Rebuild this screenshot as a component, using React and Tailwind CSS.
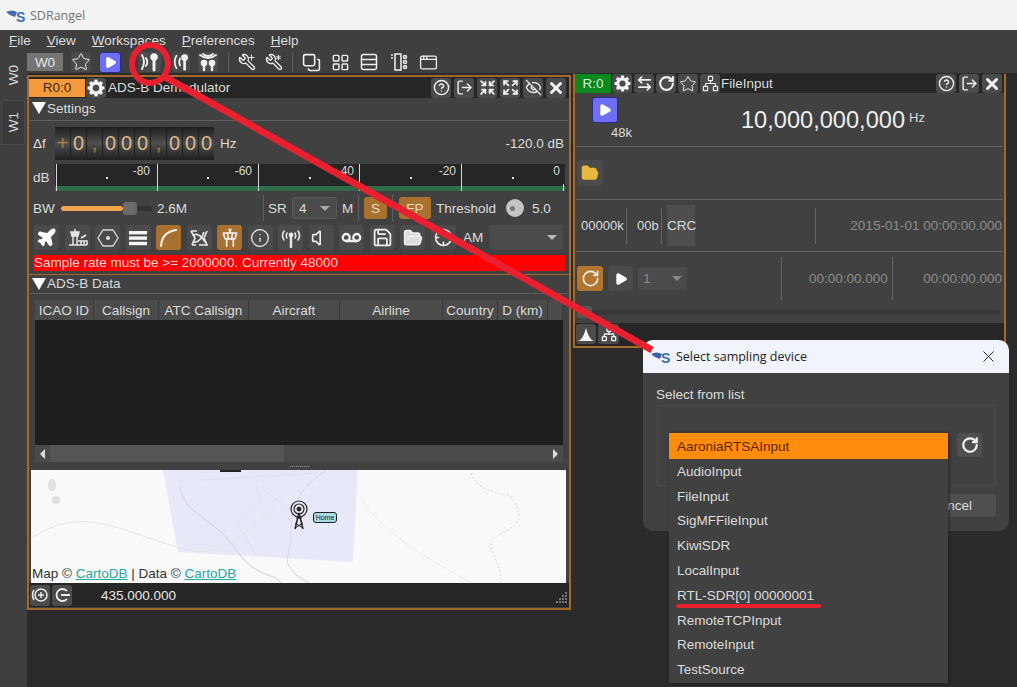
import { AppWindow, ArrowLeftRight, Asterisk, Copy, Crosshair, Expand, EyeOff, FolderOpen, Info, LayoutGrid, LogOut, Network, Plane, Play, Plus, RotateCw, Rows3, Save, Shrink, Star, TowerControl, Voicemail, Volume, Wrench, X, CircleHelp } from 'lucide-react';

const menus = [['F', 'ile'], ['V', 'iew'], ['W', 'orkspaces'], ['P', 'references'], ['H', 'elp']];
const devices = ['AudioInput', 'FileInput', 'SigMFFileInput', 'KiwiSDR', 'LocalInput', 'RTL-SDR[0] 00000001', 'RemoteTCPInput', 'RemoteInput', 'TestSource'];
const columns = [['ICAO ID', 'w-[59px]'], ['Callsign', 'w-[65px]'], ['ATC Callsign', 'w-[90px]'], ['Aircraft', 'w-[91px]'], ['Airline', 'w-[103px]'], ['Country', 'w-[55px]'], ['D (km)', 'w-[50px]'], ['', 'flex-1']];

function Logo({ dark }) {
  return (
    <div className="flex items-center w-[20px] h-[16px] relative">
      <svg width="12" height="10" viewBox="0 0 12 10" className="mt-[-2px]">
        <path d="M0 3 Q6 0 11 3 L9 8 Q4 7 0 3Z" fill={dark ? '#3d5fa8' : '#4468ad'} />
      </svg>
      <span className="text-[14px] font-bold text-[#3f6db5] leading-none ml-[-2px] mt-[3px]">S</span>
    </div>
  );
}

function Tool({ children, className = 'w-[20px] h-[20px] bg-[#4b4b4b]' }) {
  return <div className={`relative flex items-center justify-center rounded-[3px] shrink-0 text-[#f0f0f0] ${className}`}>{children}</div>;
}

function Gear({ size = 18 }) {
  const teeth = [0, 45, 90, 135, 180, 225, 270, 315];
  return (
    <svg width={size} height={size} viewBox="0 0 18 18" fill="none">
      <circle cx="9" cy="9" r="5" stroke="#f4f4f4" strokeWidth="3.4" />
      {teeth.map((a) => (
        <rect key={a} x="7.4" y="0.6" width="3.2" height="3.4" fill="#f4f4f4" transform={`rotate(${a} 9 9)`} />
      ))}
    </svg>
  );
}

function RxIcon({ flip }) {
  return (
    <svg width="20" height="20" viewBox="0 0 20 20" fill="none" stroke="#f0f0f0" strokeWidth="1.9" strokeLinecap="round">
      {flip ? (
        <>
          <path d="M5 3 Q1 10 5 17" />
          <path d="M9 6 Q7 10 9 14" />
        </>
      ) : (
        <>
          <path d="M2 3 Q6 10 2 17" />
          <path d="M6 6 Q8.5 10 6 14" />
        </>
      )}
      <circle cx="14" cy="5" r="2.8" fill="#f0f0f0" />
      <path d="M14 7 V18" strokeWidth="3" />
    </svg>
  );
}

function MimoIcon() {
  return (
    <svg width="20" height="20" viewBox="0 0 20 20" fill="none" stroke="#f0f0f0" strokeWidth="1.8" strokeLinecap="round">
      <path d="M2 3 Q10 9 18 3" />
      <path d="M5 2 Q10 6 15 2" />
      <circle cx="6" cy="11" r="2.4" fill="#f0f0f0" />
      <circle cx="14" cy="11" r="2.4" fill="#f0f0f0" />
      <path d="M6 12 V18 M14 12 V18" strokeWidth="2.4" />
    </svg>
  );
}

function SidePanelIcon() {
  return (
    <svg width="20" height="20" viewBox="0 0 20 20" fill="none" stroke="#e8e8e8" strokeWidth="1.6">
      <rect x="6" y="2" width="6" height="16" />
      <path d="M2 3 H4 M2 6 H4" />
      <circle cx="16" cy="5" r="1.5" />
      <circle cx="16" cy="10" r="1.5" />
      <circle cx="16" cy="15" r="1.5" />
    </svg>
  );
}

function HexDot() {
  return (
    <svg width="22" height="20" viewBox="0 0 22 20" fill="none" stroke="#d8d8d8" strokeWidth="1.3">
      <path d="M1 10 L6 2 H16 L21 10 L16 18 H6Z" />
      <circle cx="11" cy="10" r="1.4" fill="#e8e8e8" />
    </svg>
  );
}

function Bars() {
  return (
    <svg width="20" height="18" viewBox="0 0 20 18" fill="#f6f6f6">
      <rect x="1" y="2" width="18" height="3.4" />
      <rect x="1" y="7.4" width="18" height="3.4" />
      <rect x="1" y="12.8" width="18" height="3.4" />
    </svg>
  );
}

function Arc() {
  return (
    <svg width="19" height="19" viewBox="0 0 19 19" fill="none" stroke="#f2ece2" strokeWidth="2.2" strokeLinecap="round">
      <path d="M2 18 Q3 4 17 2" />
    </svg>
  );
}

function SweepIcon() {
  return (
    <svg width="20" height="20" viewBox="0 0 20 20" fill="none" stroke="#e8e8e8" strokeWidth="1.7">
      <path d="M2 3 L6 10 L3 17 M2 3 H8 M18 3 L15 10 L18 17 H10 M3 17 H7" />
      <path d="M5 14 Q11 15 15 4" />
      <path d="M4 8 Q9 3 16 14" />
    </svg>
  );
}

function AirportIcon() {
  return (
    <svg width="21" height="21" viewBox="0 0 21 21" fill="none" stroke="#e8e8e8" strokeWidth="1.5">
      <path d="M4 5 H12 L11 9 H5Z" fill="#e8e8e8" />
      <path d="M6 9 V18 M10 9 V18 M2 18 H20 M11 14 H20 V18 M14 14 V18 M17 14 V18" />
      <path d="M14 11 L19 8" strokeWidth="2" />
      <path d="M8 2 V5" />
    </svg>
  );
}

function AntennaIcon() {
  return (
    <svg width="22" height="20" viewBox="0 0 22 20" fill="none" stroke="#e8e8e8" strokeWidth="1.6" strokeLinecap="round">
      <path d="M4 3 Q1 8 4 12 M7 5 Q5.5 8 7 10 M18 3 Q21 8 18 12 M15 5 Q16.5 8 15 10" />
      <circle cx="11" cy="7" r="1.6" fill="#e8e8e8" />
      <path d="M11 8 V19" strokeWidth="2.4" />
    </svg>
  );
}

function Scale() {
  const majors = [1, 102, 203, 304, 406];
  const minors = [51, 152, 254, 355, 457];
  const labels = [['-80', 95], ['-60', 197], ['-40', 299], ['-20', 401], ['0', 505]];
  return (
    <svg width="510" height="28" className="block">
      <rect width="510" height="22" fill="#262626" />
      <rect y="22" width="510" height="5" fill="#2f6a4a" />
      {majors.map((x) => (
        <rect key={x} x={x} y="0" width="1" height="27" fill="#d8d8d8" />
      ))}
      <rect x="508" y="20" width="1" height="7" fill="#d8d8d8" />
      {minors.map((x) => (
        <rect key={x} x={x} y="13" width="2" height="2" fill="#e8e8e8" />
      ))}
      {labels.map(([t, x]) => (
        <text key={t} x={x} y="11" textAnchor="end" fontSize="12" fill="#d9d9d9" fontFamily="Liberation Sans, sans-serif">{t}</text>
      ))}
    </svg>
  );
}

function Digit({ children, dim }) {
  return (
    <div className={`w-[15px] h-[33px] flex items-center justify-center bg-linear-to-b from-[#1f1f1f] via-[#4f4f4f] to-[#1f1f1f] text-[20px] leading-none ${dim ? 'text-[#a5804f]' : 'text-[#d8b98d]'}`}>
      {children}
    </div>
  );
}

function MapView() {
  return (
    <div className="relative ml-[2px] w-[535px] h-[113px] bg-[#f8f9f8] overflow-hidden shrink-0">
      <svg width="535" height="113" className="block" fill="none">
        <path d="M132 0 L327 0 L322 92 L147 82Z" fill="#e8e9f8" />
        <rect x="189" y="0" width="21" height="2" fill="#222" />
        <path d="M0 68 C20 55 40 50 60 52 S100 62 130 72 S170 85 190 78 S230 45 245 40" stroke="#e2e4e8" strokeWidth="1" />
        <path d="M150 15 C148 35 170 45 190 62 S205 95 245 108 L250 113" stroke="#d8dae6" strokeWidth="1.3" />
        <path d="M295 0 C280 12 262 20 260 60 S250 85 265 105 L278 113" stroke="#d8dae6" strokeWidth="1.1" />
        <path d="M170 10 L285 3 M225 15 L260 40 M210 50 L230 30 L225 15 M205 52 L225 85" stroke="#dfe0ee" />
        <path d="M330 30 C360 70 400 90 440 113" stroke="#eceeee" />
        <path d="M440 3 C445 20 470 25 478 25 C490 40 492 50 480 58 L460 70 C458 85 470 90 470 113" stroke="#eccbd0" strokeDasharray="2 2" />
        <ellipse cx="21" cy="15" rx="4" ry="6" fill="#dce1e2" />
        <ellipse cx="25" cy="30" rx="4" ry="4" fill="#dce1e2" />
        <g stroke="#222">
          <path d="M264 59 L268 43 L272 59" strokeWidth="1.5" />
          <path d="M264 58 L272 53 M272 58 L264 53 M265 48 H271" strokeWidth="1" />
          <circle cx="268" cy="39" r="2" fill="#222" />
          <circle cx="268" cy="39" r="5" strokeWidth="1.2" />
          <circle cx="268" cy="39" r="8" strokeWidth="1.2" />
        </g>
      </svg>
      <div className="absolute left-[282px] top-[42px] w-[24px] h-[11px] rounded-[3px] border border-[#222] bg-[#a9dbe6] text-[7px] leading-[9px] text-center text-[#222]">Home</div>
      <div className="absolute left-[1px] bottom-0 leading-[18px] text-[#333] whitespace-nowrap">
        Map © <span className="text-[#26a7a7] underline">CartoDB</span> | Data © <span className="text-[#26a7a7] underline">CartoDB</span>
      </div>
    </div>
  );
}

function AdsbPanel() {
  return (
    <div className="absolute left-0 top-[2px] w-[544px] h-[535px] border-2 border-[#a06a2d] bg-[#414141] text-[#dcdcdc] flex flex-col">
      <div className="h-[21px] bg-[#262626] flex items-center shrink-0 pr-[3px]">
        <div className="w-[56px] h-[18px] bg-[#f59a3a] text-[#3c2a12] flex items-center justify-center">R0:0</div>
        <Tool className="w-[20px] h-[20px] ml-[1px] bg-[#4b4b4b]"><Gear /></Tool>
        <span className="ml-[2px]">ADS-B Demodulator</span>
        <div className="ml-auto flex gap-[3px]">
          <Tool><CircleHelp size={17} strokeWidth={2} /></Tool>
          <Tool><LogOut size={17} strokeWidth={2} /></Tool>
          <Tool><Shrink size={17} strokeWidth={2.6} /></Tool>
          <Tool><Expand size={17} strokeWidth={2.6} /></Tool>
          <Tool><EyeOff size={17} strokeWidth={1.8} /></Tool>
          <Tool><X size={18} strokeWidth={4} /></Tool>
        </div>
      </div>
      <div className="h-[22px] flex items-center pl-[3px] pb-[2px] shrink-0">
        <div className="w-0 h-0 border-l-[7px] border-r-[7px] border-t-[12px] border-l-transparent border-r-transparent border-t-white" />
        <span className="ml-[1px]">Settings</span>
      </div>
      <div className="h-px bg-[#5f5f5f] mx-[1px] shrink-0" />
      <div className="flex items-center h-[34px] mt-[5px] pl-[4px] pr-[5px] shrink-0">
        <span className="w-[22px]">Δf</span>
        <div className="flex gap-px bg-[#1c1c1c]">
          <Digit dim>+</Digit><Digit>0</Digit><Digit dim>,</Digit><Digit>0</Digit><Digit>0</Digit><Digit>0</Digit><Digit dim>,</Digit><Digit>0</Digit><Digit>0</Digit><Digit>0</Digit>
        </div>
        <span className="ml-[6px]">Hz</span>
        <span className="ml-auto">-120.0 dB</span>
      </div>
      <div className="flex items-center h-[28px] mt-[4px] pl-[4px] shrink-0">
        <span className="w-[22px] pb-[2px]">dB</span>
        <Scale />
      </div>
      <div className="flex items-center h-[22px] mt-[5px] pl-[4px] shrink-0">
        <span className="w-[28px]">BW</span>
        <div className="w-[91px] h-[5px] rounded-full bg-[#333] relative">
          <div className="w-[62px] h-[5px] rounded-full bg-[#efa64d]" />
          <div className="absolute left-[62px] top-[-4px] w-[14px] h-[13px] rounded-[3px] bg-[#6a6a6a]" />
        </div>
        <span className="ml-[5px] w-[106px]">2.6M</span>
        <div className="w-px h-[26px] bg-[#5f5f5f]" />
        <span className="ml-[4px] w-[24px]">SR</span>
        <div className="w-[45px] h-[22px] rounded-[3px] bg-[#4b4b4b] border border-[#5a5a5a] flex items-center justify-between px-[6px]">
          <span>4</span>
          <div className="w-0 h-0 border-l-[5px] border-r-[5px] border-t-[5px] border-l-transparent border-r-transparent border-t-[#aaa]" />
        </div>
        <span className="ml-[5px] w-[16px]">M</span>
        <div className="w-px h-[26px] bg-[#5f5f5f]" />
        <div className="ml-[5px] w-[23px] h-[22px] rounded-[3px] bg-[#a9712f] flex items-center justify-center text-[#e9d8c0]">S</div>
        <div className="ml-[5px] w-px h-[26px] bg-[#5f5f5f]" />
        <div className="ml-[6px] w-[32px] h-[22px] rounded-[3px] bg-[#a9712f] flex items-center justify-center text-[#e9d8c0]">FP</div>
        <span className="ml-[5px]">Threshold</span>
        <div className="ml-[10px] w-[18px] h-[18px] rounded-full bg-[#c4c4c4] flex items-center justify-center">
          <div className="w-[5px] h-[5px] rounded-full bg-[#777] mr-[5px]" />
        </div>
        <span className="ml-[8px]">5.0</span>
      </div>
      <div className="flex items-center h-[25px] mt-[6px] pl-[5px] gap-[5.5px] shrink-0">
        <Tool className="w-[25px] h-[25px] bg-[#4b4b4b]"><Plane size={21} fill="#fff" stroke="#fff" /></Tool>
        <Tool className="w-[25px] h-[25px] bg-[#4b4b4b]"><AirportIcon /></Tool>
        <Tool className="w-[25px] h-[25px] bg-[#4b4b4b]"><HexDot /></Tool>
        <Tool className="w-[25px] h-[25px] bg-[#4b4b4b]"><Bars /></Tool>
        <Tool className="w-[25px] h-[25px] bg-[#a9712f]"><Arc /></Tool>
        <Tool className="w-[25px] h-[25px] bg-[#4b4b4b]"><SweepIcon /></Tool>
        <Tool className="w-[25px] h-[25px] bg-[#a9712f]"><TowerControl size={20} /></Tool>
        <Tool className="w-[25px] h-[25px] bg-[#4b4b4b]"><Info size={20} strokeWidth={1.5} /></Tool>
        <Tool className="w-[25px] h-[25px] bg-[#4b4b4b]"><AntennaIcon /></Tool>
        <Tool className="w-[25px] h-[25px] bg-[#4b4b4b]"><Volume size={20} /></Tool>
        <Tool className="w-[25px] h-[25px] bg-[#4b4b4b]"><Voicemail size={21} strokeWidth={2.6} /></Tool>
        <Tool className="w-[25px] h-[25px] bg-[#4b4b4b]"><Save size={21} /></Tool>
        <Tool className="w-[25px] h-[25px] bg-[#4b4b4b]"><FolderOpen size={20} fill="#ddd" /></Tool>
        <Tool className="w-[25px] h-[25px] bg-[#4b4b4b]"><Crosshair size={19} /></Tool>
        <span className="ml-[2px]">AM</span>
        <div className="w-[74px] h-[25px] rounded-[3px] bg-[#4b4b4b] flex items-center justify-end pr-[6px]">
          <div className="w-0 h-0 border-l-[5px] border-r-[5px] border-t-[5px] border-l-transparent border-r-transparent border-t-[#bbb]" />
        </div>
      </div>
      <div className="h-[16px] mt-[5px] ml-[4px] w-[532px] bg-[#ff0000] text-[#f5d8d8] leading-[16px] pl-px shrink-0">Sample rate must be &gt;= 2000000. Currently 48000</div>
      <div className="h-px mt-[3px] bg-[#a06a2d] shrink-0" />
      <div className="h-[18px] flex items-center pl-[3px] pb-[1px] shrink-0">
        <div className="w-0 h-0 border-l-[7px] border-r-[7px] border-t-[12px] border-l-transparent border-r-transparent border-t-white" />
        <span className="ml-[1px]">ADS-B Data</span>
      </div>
      <div className="h-px bg-[#5f5f5f] mx-[1px] shrink-0" />
      <div className="h-[162px] mt-[6px] ml-[6px] w-[528px] flex flex-col shrink-0 bg-[#1f1f1f]">
        <div className="h-[20px] flex bg-[#4b4b4b] shrink-0">
          {columns.map(([name, width]) => (
            <div key={name} className={`${width} border-r border-[#3a3a3a] flex items-center justify-center whitespace-nowrap`}>{name}</div>
          ))}
        </div>
        <div className="flex-1" />
        <div className="h-[17px] flex items-center bg-[#4a4a4a] shrink-0">
          <div className="w-[15px] flex justify-center"><div className="w-0 h-0 border-t-[5px] border-b-[5px] border-r-[5px] border-t-transparent border-b-transparent border-r-[#ddd]" /></div>
          <div className="w-[234px] h-[17px] bg-[#555]" />
          <div className="ml-auto w-[15px] flex justify-center"><div className="w-0 h-0 border-t-[5px] border-b-[5px] border-l-[5px] border-t-transparent border-b-transparent border-l-[#ddd]" /></div>
        </div>
      </div>
      <div className="h-[8px] flex items-center justify-center shrink-0">
        <div className="w-[19px] h-px border-t border-dotted border-[#999]" />
      </div>
      <MapView />
      <div className="h-[24px] bg-[#262626] flex items-center gap-[2px] relative shrink-0 pl-px">
        <Tool className="w-[20px] h-[21px] bg-[#4b4b4b]"><svg width="18" height="18" viewBox="0 0 18 18" fill="none" stroke="#eee" strokeWidth="1.5"><circle cx="10" cy="9" r="6" /><path d="M10 6 V12 M7 9 H13 M3 4 Q0 9 3 14" /></svg></Tool>
        <Tool className="w-[20px] h-[21px] bg-[#4b4b4b]"><svg width="18" height="18" viewBox="0 0 18 18" fill="none" stroke="#eee" strokeWidth="1.8"><path d="M14 5 A6 6 0 1 0 14 13 M8 9 H17" /></svg></Tool>
        <span className="ml-[27px] text-[#e6e6e6]">435.000.000</span>
        <svg width="14" height="14" viewBox="0 0 14 14" className="ml-auto mr-px mt-[6px]" fill="#777">
          <rect x="11" y="1" width="2" height="2" /><rect x="8" y="4" width="2" height="2" /><rect x="11" y="4" width="2" height="2" /><rect x="5" y="7" width="2" height="2" /><rect x="8" y="7" width="2" height="2" /><rect x="11" y="7" width="2" height="2" /><rect x="2" y="10" width="2" height="2" /><rect x="5" y="10" width="2" height="2" /><rect x="8" y="10" width="2" height="2" /><rect x="11" y="10" width="2" height="2" />
        </svg>
      </div>
    </div>
  );
}

function FileInputPanel() {
  return (
    <div className="absolute left-[546px] top-[1px] w-[433px] h-[274px] border-2 border-t-0 border-[#a06a2d] bg-[#414141] text-[#dcdcdc] flex flex-col">
      <div className="h-[19px] bg-[#262626] flex items-center shrink-0 pr-[2px]">
        <div className="w-[36px] h-[19px] bg-[#0a8a1e] text-[#d8f0d8] flex items-center justify-center">R:0</div>
        <div className="flex gap-[2px] ml-[1px]">
          <Tool className="w-[20px] h-[19px] bg-[#4b4b4b]"><Gear size={17} /></Tool>
          <Tool className="w-[20px] h-[19px] bg-[#4b4b4b]"><ArrowLeftRight size={17} strokeWidth={2.4} /></Tool>
          <Tool className="w-[20px] h-[19px] bg-[#4b4b4b]"><RotateCw size={17} strokeWidth={3} /></Tool>
          <Tool className="w-[20px] h-[19px] bg-[#4b4b4b]"><Star size={18} strokeWidth={1.3} /></Tool>
          <Tool className="w-[20px] h-[19px] bg-[#4b4b4b]"><Network size={17} strokeWidth={1.6} /></Tool>
        </div>
        <span className="ml-px">FileInput</span>
        <div className="ml-auto flex gap-[3px]">
          <Tool className="w-[20px] h-[19px] bg-[#4b4b4b]"><CircleHelp size={17} /></Tool>
          <Tool className="w-[20px] h-[19px] bg-[#4b4b4b]"><LogOut size={17} /></Tool>
          <Tool className="w-[20px] h-[19px] bg-[#4b4b4b]"><X size={18} strokeWidth={4} /></Tool>
        </div>
      </div>
      <div className="h-[53px] relative flex shrink-0">
        <div className="w-[160px] pl-[17px] pt-[4px] flex flex-col">
          <div className="w-[26px] h-[26px] rounded-[3px] bg-[#6f6ff5] border border-[#2a2a90] flex items-center justify-center"><Play size={14} fill="#fff" stroke="#fff" /></div>
          <span className="ml-[19px] mt-[2px] text-[13px] leading-[16px]">48k</span>
        </div>
        <span className="mt-[12px] text-[23.6px] leading-[30px] text-[#eeeeee] whitespace-nowrap ml-[6px]">10,000,000,000</span>
        <span className="mt-[16px] ml-[4px] text-[13px] leading-[18px]">Hz</span>
      </div>
      <div className="h-px bg-[#666] mx-px shrink-0" />
      <div className="h-[52px] flex items-center pl-[2px] shrink-0">
        <Tool className="w-[26px] h-[26px] bg-[#4b4b4b]"><FolderOpen size={18} fill="#e9b93f" stroke="#e9b93f" /></Tool>
      </div>
      <div className="h-px bg-[#666] mx-px shrink-0" />
      <div className="h-[41px] mt-[5px] flex items-center shrink-0">
        <span className="ml-[6px] w-[45px] text-[13px]">00000k</span>
        <div className="w-px h-[36px] bg-[#666]" />
        <span className="ml-[10px] w-[24px] text-[13px]">00b</span>
        <div className="w-px h-[36px] bg-[#666]" />
        <div className="ml-[5px] w-[28px] h-[41px] bg-[#4e4e4e] flex items-center">CRC</div>
        <div className="ml-[120px] w-px h-[36px] bg-[#666]" />
        <span className="ml-auto mr-[2px] text-[#8c8c8c]">2015-01-01 00:00:00.000</span>
      </div>
      <div className="h-px mt-[5px] bg-[#666] mx-px shrink-0" />
      <div className="h-[43px] mt-[5px] flex items-center pl-[2px] pr-[2px] shrink-0">
        <Tool className="w-[26px] h-[25px] bg-[#b17731]"><RotateCw size={19} /></Tool>
        <Tool className="ml-[5px] w-[25px] h-[25px] bg-[#4b4b4b]"><Play size={14} fill="#fff" stroke="#fff" /></Tool>
        <div className="ml-[5px] w-[49px] h-[23px] rounded-[3px] bg-[#4b4b4b] flex items-center justify-between px-[5px] text-[#8c8c8c]">
          <span>1</span>
          <div className="w-0 h-0 border-l-[5px] border-r-[5px] border-t-[5px] border-l-transparent border-r-transparent border-t-[#888]" />
        </div>
        <div className="ml-[94px] w-px h-[43px] bg-[#666]" />
        <span className="ml-[27px] text-[#8c8c8c]">00:00:00.000</span>
        <div className="ml-[4px] w-px h-[43px] bg-[#666]" />
        <span className="ml-auto text-[#8c8c8c]">00:00:00.000</span>
      </div>
      <div className="h-[16px] mt-[4px] flex items-center pl-[2px] pr-[4px] shrink-0">
        <div className="w-[15px] h-[12px] rounded-[2px] bg-[#555]" />
        <div className="flex-1 h-[5px] rounded-full bg-[#383838]" />
      </div>
      <div className="flex-1 mt-[3px] bg-[#262626] flex items-start gap-[2px] pt-px pl-px">
        <Tool className="w-[20px] h-[20px] bg-[#4b4b4b]"><svg width="18" height="18" viewBox="0 0 18 18" fill="#f4f4f4"><path d="M1 16 Q6 15 9 3 Q12 15 17 16Z" /></svg></Tool>
        <Tool className="w-[21px] h-[20px] bg-[#4b4b4b]"><Network size={16} /></Tool>
      </div>
    </div>
  );
}

function SamplingDialog() {
  return (
    <div className="absolute left-[616px] top-[267px] w-[366px] h-[191px] rounded-[10px] bg-[#414141] flex flex-col text-[#dcdcdc]">
      <div className="h-[33px] bg-[#f1f4fa] rounded-t-[10px] flex items-center pl-[8px] pr-[11px] shrink-0">
        <Logo dark />
        <span className="ml-[5px] font-['Open_Sans',sans-serif] text-[12.5px] text-[#222]">Select sampling device</span>
        <X size={19} strokeWidth={1.2} className="ml-auto text-[#222]" />
      </div>
      <span className="ml-[13px] mt-[13px] leading-[17px]">Select from list</span>
      <div className="ml-[14px] mt-[2px] w-[339px] h-[81px] border border-[#4a4a4a] rounded-[2px] flex justify-end items-start pt-[27px] pr-[13px] shrink-0">
        <Tool className="w-[25px] h-[24px] bg-[#4f4f4f]"><RotateCw size={18} strokeWidth={3} /></Tool>
      </div>
      <div className="ml-auto mr-[13px] mt-[8px] w-[90px] h-[23px] rounded-[3px] bg-[#4f4f4f] flex items-center justify-center">Cancel</div>
      <div className="absolute left-[26px] top-[93px] w-[279px] h-[250px] bg-[#414141] shadow-[1px_1px_3px_#222] flex flex-col">
        <div className="h-[26px] bg-[#ff8c0a] text-[#5a2400] flex items-center pl-[8px] shrink-0">AaroniaRTSAInput</div>
        {devices.map((name) => (
          <div key={name} className="h-[24.8px] flex items-center pl-[8px] shrink-0">{name}</div>
        ))}
      </div>
    </div>
  );
}

export default function App() {
  return (
    <div className="relative w-[1017px] h-[687px] overflow-hidden bg-[#3f3f3f] flex flex-col font-['Liberation_Sans',Arial,sans-serif] text-[13.5px] leading-[17px]">
      <div className="h-[30px] bg-[#f3f3f3] flex items-center pl-[6px] shrink-0">
        <Logo />
        <span className="ml-[4px] font-['Open_Sans',sans-serif] text-[12.5px] text-[#757575]">SDRangel</span>
      </div>
      <div className="h-[21px] flex items-center pl-[9px] gap-[16px] text-[#dedede] shrink-0">
        {menus.map(([first, rest]) => (
          <span key={first}><span className="underline">{first}</span>{rest}</span>
        ))}
      </div>
      <div className="h-[22px] flex items-center pl-[27px] shrink-0">
        <div className="w-[36px] h-[18px] bg-[#757575] text-[#e5e5e5] flex items-center justify-center">W0</div>
        <div className="ml-[8px] flex items-center gap-[8px]">
          <Tool><Star size={20} strokeWidth={1.2} /></Tool>
          <Tool className="w-[22px] h-[21px] bg-[#6f6ff5] border border-[#2a2a90]"><Play size={13} fill="#fff" stroke="#fff" /></Tool>
        </div>
        <Tool className="ml-[18px] w-[22px] h-[20px] bg-[#4b4b4b]"><RxIcon /></Tool>
        <Tool className="ml-[11px] w-[18px] h-[20px] bg-[#4b4b4b]"><RxIcon flip /></Tool>
        <Tool className="ml-[8px] bg-[#4b4b4b]"><MimoIcon /></Tool>
        <div className="ml-[10px] w-px h-[20px] bg-[#5f5f5f]" />
        <Tool className="ml-[9px]"><Wrench size={18} strokeWidth={1.8} className="scale-x-[-1]" /><Plus size={9} strokeWidth={2.5} className="absolute right-0 top-0" /></Tool>
        <Tool className="ml-[9px]"><Wrench size={18} strokeWidth={1.8} className="scale-x-[-1]" /><Asterisk size={9} strokeWidth={2.5} className="absolute right-0 top-0" /></Tool>
        <div className="ml-[9px] w-px h-[20px] bg-[#5f5f5f]" />
        <Tool className="ml-[9px]"><Copy size={19} strokeWidth={2} className="scale-x-[-1] scale-y-[-1]" /></Tool>
        <Tool className="ml-[10px]"><LayoutGrid size={19} strokeWidth={1.8} /></Tool>
        <Tool className="ml-[9px]"><Rows3 size={20} strokeWidth={1.8} /></Tool>
        <Tool className="ml-[10px]"><SidePanelIcon /></Tool>
        <Tool className="ml-[10px]"><AppWindow size={19} strokeWidth={1.6} /></Tool>
      </div>
      <div className="flex-1 flex min-h-0">
        <div className="w-[27px] flex flex-col shrink-0 text-[#dcdcdc] mt-[-20px] relative">
          <div className="h-[44px] flex items-center justify-center">
            <span className="[writing-mode:vertical-rl] rotate-180">W0</span>
          </div>
          <div className="mt-[3px] mr-[2px] ml-px h-[45px] bg-[#3a3a3a] border border-[#4a4a4a] rounded-l-[3px] flex items-center justify-center">
            <span className="[writing-mode:vertical-rl] rotate-180">W1</span>
          </div>
        </div>
        <div className="relative flex-1 bg-[#2b2b2b]">
          <AdsbPanel />
          <FileInputPanel />
          <SamplingDialog />
        </div>
      </div>
      <svg width="1017" height="687" className="absolute left-0 top-0 pointer-events-none" fill="none">
        <ellipse cx="150" cy="64" rx="18" ry="19" stroke="#e8202f" strokeWidth="6" />
        <path d="M165 77 L652 350" stroke="#e8202f" strokeWidth="7" />
        <path d="M678 606 H819" stroke="#e8202f" strokeWidth="4" strokeLinecap="round" />
      </svg>
    </div>
  );
}
